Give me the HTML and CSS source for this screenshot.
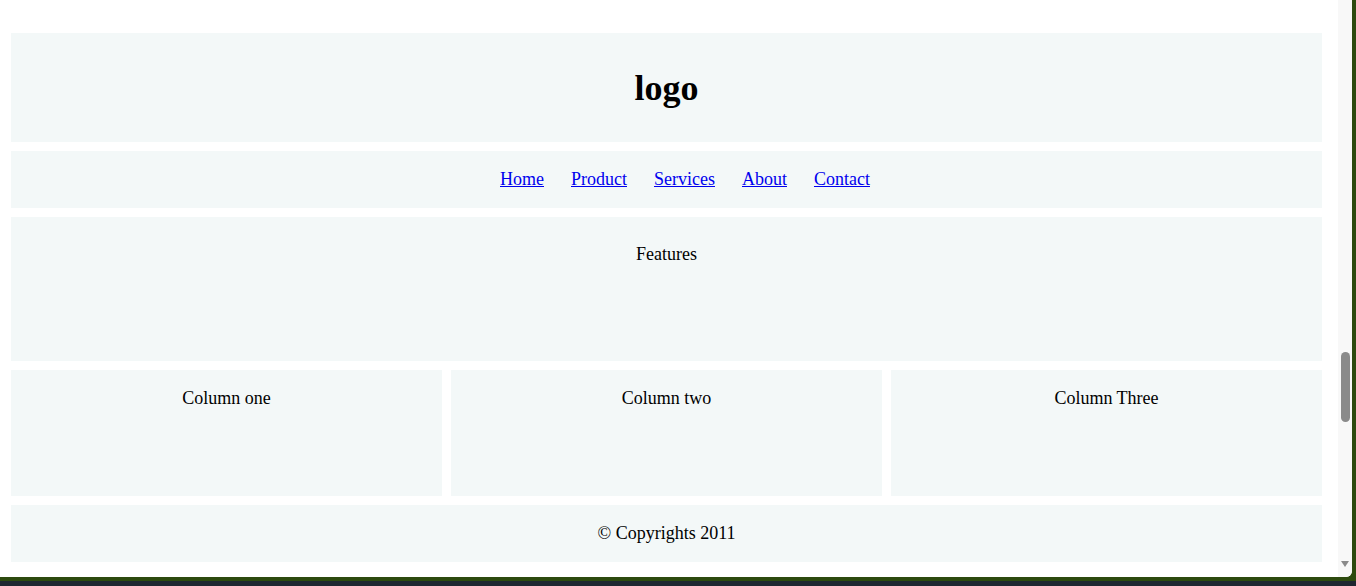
FILE: index.html
```html
<!DOCTYPE html>
<html>
<head>
<meta charset="utf-8">
<title>Layout</title>
<link rel="stylesheet" href="styles.css">
</head>
<body>
<div class="window">
  <div class="viewport">
    <div class="page">
      <header class="block header"><h1 class="logo">logo</h1></header>
      <nav class="block nav">
        <a href="#">Home</a>
        <a href="#">Product</a>
        <a href="#">Services</a>
        <a href="#">About</a>
        <a href="#">Contact</a>
      </nav>
      <section class="block features">Features</section>
      <div class="columns">
        <div class="block column">Column one</div>
        <div class="block column">Column two</div>
        <div class="block column">Column Three</div>
      </div>
      <footer class="block footer">&copy; Copyrights 2011</footer>
    </div>
    <div class="scrollbar">
      <div class="thumb"></div>
      <div class="arrow"></div>
    </div>
  </div>
</div>
</body>
</html>
```
FILE: styles.css
```css
html, body {
  margin: 0;
  padding: 0;
}
body {
  width: 1356px;
  height: 586px;
  background: #1e2630;
  overflow: hidden;
  font-family: "Liberation Serif", "Times New Roman", serif;
  font-size: 18px;
  color: #000;
}
.window {
  width: 1352px;
  height: 577px;
  border-right: 4px solid #2d4a0e;
  border-bottom: 4px solid #2d4a0e;
  background: #2d4a0e;
}
.viewport {
  display: flex;
  height: 577px;
  background: #fff;
  border-bottom-right-radius: 6px;
  overflow: hidden;
}
.page {
  flex: 1;
  padding: 33px 16px 0 11px;
  display: flex;
  flex-direction: column;
  gap: 9px;
}
.block {
  background: #f3f8f8;
  text-align: center;
}
.header {
  height: 109px;
  box-sizing: border-box;
  padding-top: 1px;
  display: flex;
  align-items: center;
  justify-content: center;
}
.logo {
  margin: 0;
  font-size: 36px;
  font-weight: bold;
}
.nav {
  height: 57px;
  box-sizing: border-box;
  padding: 0 0 1px 37px;
  display: flex;
  align-items: center;
  justify-content: center;
  gap: 27px;
}
.nav a {
  color: #0000ee;
  text-decoration: underline;
}
.features {
  height: 144px;
  box-sizing: border-box;
  padding-top: 27px;
}
.columns {
  display: grid;
  grid-template-columns: repeat(3, 1fr);
  gap: 9px;
}
.column {
  height: 126px;
  box-sizing: border-box;
  padding-top: 18px;
}
.footer {
  height: 57px;
  box-sizing: border-box;
  padding-bottom: 1px;
  display: flex;
  align-items: center;
  justify-content: center;
}
.scrollbar {
  width: 14px;
  background: #f8f8f8;
  position: relative;
}
.thumb {
  position: absolute;
  left: 3px;
  top: 352px;
  width: 9px;
  height: 70px;
  border-radius: 5px;
  background: #8a8a8a;
}
.arrow {
  position: absolute;
  left: 3px;
  top: 561px;
  width: 0;
  height: 0;
  border-left: 4px solid transparent;
  border-right: 4px solid transparent;
  border-top: 6px solid #8a8a8a;
}
```
